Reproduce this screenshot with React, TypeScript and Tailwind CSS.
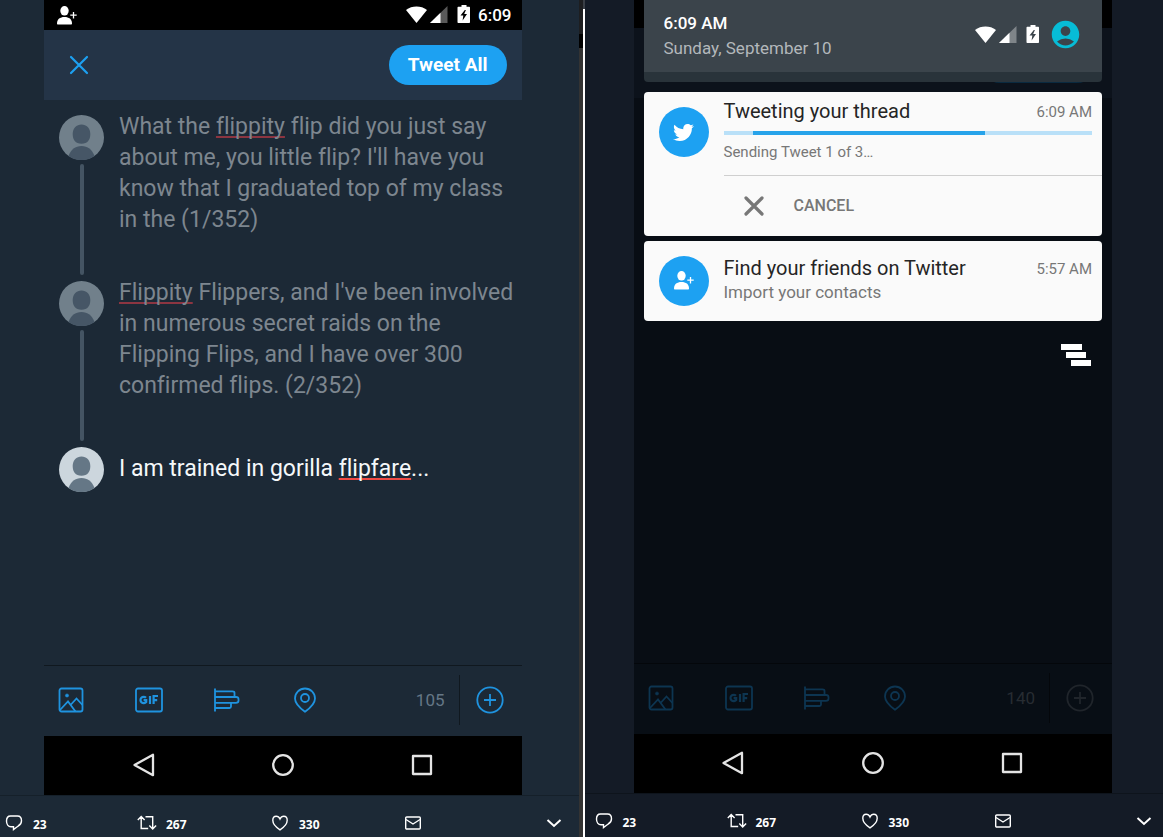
import type { ReactNode } from "react";
import { FaTwitter } from "react-icons/fa";
import { MdAccountCircle } from "react-icons/md";
import clsx from "clsx";

function PersonAddIcon({ className }: { className?: string }) {
  return (
    <svg viewBox="0 0 20 19" className={className} fill="currentColor" aria-hidden="true">
      <ellipse cx="7.5" cy="4.8" rx="4.2" ry="4.8" />
      <path d="M0 17.4c0-4.2 3-6.4 7.5-6.4s7.500 2.200 7.500 6.400c0 .7-.4 1.100-1 1.100H1c-.6 0-1-.4-1-1.100z" />
      <path d="M16.500 6v6.400M13.300 9.200h6.400" stroke="currentColor" strokeWidth="1.300" />
    </svg>
  );
}

function SystemIcons() {
  return (
    <svg viewBox="0 0 64 20" className="h-5 w-16" fill="#fff" aria-hidden="true">
      <path d="M0 5C6 .4 15 .4 21 5L10.500 18z" />
      <path d="M41.500 1v17H24z" opacity=".35" />
      <path d="M34.500 7.800V18H24z" />
      <path
        fillRule="evenodd"
        d="M55.500 0h5v1.800h2.500c.6 0 1 .4 1 1V17c0 .6-.4 1-1 1H52.500c-.6 0-1-.4-1-1V2.800c0-.6.400-1 1-1h3zM58.800 5l-4.300 5.600h2.800l-.7 4.900 4.400-6.400h-2.800l1.700-4.100z"
      />
    </svg>
  );
}

function Avatar({ active }: { active?: boolean }) {
  return (
    <svg viewBox="0 0 45 45" className="size-[45px] shrink-0" aria-hidden="true">
      <circle cx="22.500" cy="22.500" r="22.500" fill={active ? "#ccd6dd" : "#71808b"} />
      <g fill={active ? "#657786" : "#465666"}>
        <path d="M22.500 9.500c5 0 8.800 3.600 8.800 9.500 0 5.700-2.600 9.800-8.800 9.800s-8.800-4.100-8.800-9.800c0-5.900 3.800-9.500 8.800-9.500z" />
        <path d="M9.500 40.900C11.800 34.500 16.300 31 22.500 31s10.700 3.500 13 9.900a22.500 22.500 0 0 1-26 0z" />
      </g>
    </svg>
  );
}

function CloseIcon({ className, strokeWidth }: { className?: string; strokeWidth: number }) {
  return (
    <svg viewBox="0 0 20 20" className={className} fill="none" stroke="currentColor" strokeWidth={strokeWidth} strokeLinecap="round" aria-hidden="true">
      <path d="M2 2l16 16M18 2L2 18" />
    </svg>
  );
}

const tools: { label: string; icon: ReactNode }[] = [
  {
    label: "Add photo",
    icon: (
      <>
        <rect x="2.500" y="2.500" width="23" height="23" rx="2" />
        <path d="M3 24l8-8.500 7.500 10M14 18.500l5.500-6 6 6.500" />
        <circle cx="10" cy="9.500" r="1.600" fill="currentColor" strokeWidth="0.500" />
      </>
    ),
  },
  {
    label: "Add GIF",
    icon: (
      <>
        <rect x="1" y="2.500" width="26" height="23" rx="2" />
        <path strokeWidth="2.200" d="M11 11.800a3.200 3.200 0 1 0 .2 4.200v-1.800H8.600M15 10v8M18.600 18v-8h4.400M18.600 14.200h3.600" />
      </>
    ),
  },
  {
    label: "Add poll",
    icon: <path d="M2 2.500v23M2 5.300h17.500c1.500 0 2 .6 2 1.500v4M2 11h21c1.700 0 2.500.7 2.500 2v1.800c0 1.300-.8 2-2.500 2H2M18 16.800v3.700c0 .9-.5 1.500-1.500 1.500H2" />,
  },
  {
    label: "Add location",
    icon: (
      <>
        <path d="M14 25.700C8.500 21.800 4 18 4 12.500a10 10 0 0 1 20 0c0 5.500-4.500 9.300-10 13.200z" />
        <circle cx="14" cy="12" r="4" />
      </>
    ),
  },
];

function Toolbar({ count, dimmed }: { count: number; dimmed?: boolean }) {
  return (
    <div
      className={clsx(
        "flex h-[71px] items-center border-t pb-0.5 pl-[13px] pr-[18px]",
        dimmed ? "border-[#04070b] bg-[#080e15] text-[#0d3551]" : "border-[#10181f] text-[#1f93df]"
      )}
    >
      <div className="flex gap-[50px]">
        {tools.map((tool) => (
          <button key={tool.label} aria-label={tool.label} className="block">
            <svg viewBox="0 0 28 28" className="size-7" fill="none" stroke="currentColor" strokeWidth="1.800">
              {tool.icon}
            </svg>
          </button>
        ))}
      </div>
      <span className={clsx("ml-auto pt-0.5 text-[17px]", dimmed ? "text-[#272c32]" : "text-[#657786]")}>{count}</span>
      <div className={clsx("ml-[14px] mr-4 h-[50px] w-px", dimmed ? "bg-[#04070b]" : "bg-[#10181f]")} />
      <button aria-label="Add another Tweet" className={clsx("block", dimmed && "text-[#20252b]")}>
        <svg viewBox="0 0 28 28" className="size-7" fill="none" stroke="currentColor" strokeWidth="1.800">
          <circle cx="14" cy="14" r="12.700" />
          <path d="M14 8v12M8 14h12" />
        </svg>
      </button>
    </div>
  );
}

function NavBar() {
  return (
    <div className="grid h-[59px] grid-cols-3 place-items-center bg-black px-[30px] pb-0.5 text-[#e4e4e4]">
      <button aria-label="Back">
        <svg viewBox="0 0 28 28" className="size-7" fill="none" stroke="currentColor" strokeWidth="2.300" strokeLinejoin="round">
          <path d="M23 3.800v20.400L4.500 14z" />
        </svg>
      </button>
      <button aria-label="Home">
        <svg viewBox="0 0 28 28" className="size-7" fill="none" stroke="currentColor" strokeWidth="2.300">
          <circle cx="14" cy="14" r="9.800" />
        </svg>
      </button>
      <button aria-label="Recent apps">
        <svg viewBox="0 0 28 28" className="size-7" fill="none" stroke="currentColor" strokeWidth="2.300" strokeLinejoin="round">
          <rect x="5" y="5" width="18" height="18" />
        </svg>
      </button>
    </div>
  );
}

const stats: { label: string; count?: number; icon: ReactNode }[] = [
  {
    label: "Reply",
    count: 23,
    icon: <path d="M6.500 3h7c2.500 0 4 2 4 4.800 0 2.500-1.300 4.200-3.300 5.200L9.500 16.500v-2.700H7C4.200 13.800 2.500 11 2.500 8S4.200 3 6.500 3z" />,
  },
  {
    label: "Retweet",
    count: 267,
    icon: <path d="M.8 7l3.400-3.500L7.600 7M4.200 3.800v11.700h7M8.500 3.800h7.200v11.700M12.300 12.500l3.400 3.500 3.400-3.500" />,
  },
  {
    label: "Like",
    count: 330,
    icon: <path d="M10 16.800c-4-2.500-7.200-6-7.200-9.500 0-2.500 1.600-4 3.400-4C8 3.300 9.300 4.500 10 6c.7-1.500 2-2.700 3.800-2.700 1.800 0 3.400 1.500 3.400 4 0 3.500-3.200 7-7.200 9.500z" />,
  },
  {
    label: "Message",
    icon: (
      <>
        <rect x="2.700" y="4" width="14.600" height="12" rx="1" />
        <path d="M3 6.500l7 4.500 7-4.500" />
      </>
    ),
  },
];

function TweetActions({ className }: { className?: string }) {
  return (
    <footer className={clsx("flex items-start border-t pt-[17px] text-white", className)}>
      {stats.map((stat) => (
        <button key={stat.label} aria-label={stat.label} className="flex w-[133px] items-start gap-[9px]">
          <svg viewBox="0 0 20 20" className="size-5" fill="none" stroke="currentColor" strokeWidth="1.400">
            {stat.icon}
          </svg>
          {stat.count && <span className="pt-0.5 font-['Open_Sans',sans-serif] text-xs/5 font-bold">{stat.count}</span>}
        </button>
      ))}
      <button aria-label="More" className="ml-auto">
        <svg viewBox="0 0 20 20" className="size-5" fill="none" stroke="currentColor" strokeWidth="2">
          <path d="M3.500 7l6.500 6 6.500-6" />
        </svg>
      </button>
    </footer>
  );
}

function Typo({ children, active }: { children: string; active?: boolean }) {
  return (
    <span
      className={clsx(
        "underline decoration-2 underline-offset-2 [text-decoration-skip-ink:none]",
        active ? "decoration-[#ef4a44]" : "decoration-[#8c3541]"
      )}
    >
      {children}
    </span>
  );
}

function ThreadItem({ children, active }: { children: ReactNode; active?: boolean }) {
  return (
    <li className="flex gap-[15px]">
      <div className="flex flex-col items-center pt-1">
        <Avatar active={active} />
        {!active && <div className="mb-0.5 mt-1 w-1 flex-1 rounded-full bg-[#445463]" />}
      </div>
      <p
        className={clsx(
          "text-[23px]/[31px] [font-variant-ligatures:none]",
          active ? "pt-[10px] text-[#f5f8fa]" : "pb-[42px] text-[#7d868f]"
        )}
      >
        {children}
      </p>
    </li>
  );
}

function ComposePanel() {
  return (
    <section className="flex flex-1 flex-col bg-[#1c2936]">
      <div className="ml-11 mr-[57px] flex flex-1 flex-col">
        <div className="flex h-[30px] items-center bg-black pl-[13px] pr-[10px] text-white">
          <PersonAddIcon className="h-[19px] w-5" />
          <div className="ml-auto flex items-center gap-2">
            <SystemIcons />
            <span className="text-[17px]/5 font-medium">6:09</span>
          </div>
        </div>
        <header className="flex h-[70px] items-center justify-between bg-[#243447] pl-[25px] pr-[15px]">
          <button aria-label="Close" className="text-[#1da1f2]">
            <CloseIcon className="size-5" strokeWidth={2.2} />
          </button>
          <button className="h-10 rounded-full bg-[#1da1f2] px-[19px] text-[19px] font-bold text-white">Tweet All</button>
        </header>
        <ol className="flex-1 pl-[15px] pr-2 pt-[11px]">
          <ThreadItem>
            What the <Typo>flippity</Typo> flip did you just say about me, you little flip? I'll have you know that I
            graduated top of my class in the (1/352)
          </ThreadItem>
          <ThreadItem>
            <Typo>Flippity</Typo> Flippers, and I've been involved in numerous secret raids on the Flipping Flips, and I
            have over 300 confirmed flips. (2/352)
          </ThreadItem>
          <ThreadItem active>
            I am trained in gorilla <Typo active>flipfare</Typo>...
          </ThreadItem>
        </ol>
        <Toolbar count={105} />
        <NavBar />
      </div>
      <TweetActions className="h-[42px] border-[#15202a] pl-1 pr-[15px]" />
    </section>
  );
}

function Divider() {
  return (
    <div className="flex w-1.5">
      <div className="flex w-1 flex-col bg-[#333]">
        <div className="h-[34px] bg-[#1d1e20]" />
        <div className="h-[14px] bg-black" />
      </div>
      <div className="flex w-0.5 flex-col bg-white">
        <div className="h-[9px] bg-[#3a3f46]" />
      </div>
    </div>
  );
}

function Notifications() {
  return (
    <div className="px-[10px]">
      <header className="flex h-[82px] items-start rounded-b-sm border-b-[10px] border-[#29333a] bg-[#3b444b] pl-5 pr-5 pt-[11px]">
        <div className="text-[17px]/[25px]">
          <h2 className="font-medium text-white">6:09 AM</h2>
          <p className="text-[#b3b8bb]">Sunday, September 10</p>
        </div>
        <div className="ml-auto flex items-center gap-[10px] pt-[7px]">
          <SystemIcons />
          <button aria-label="Account" className="text-[#07bcd6]">
            <MdAccountCircle size={33} />
          </button>
        </div>
      </header>

      <article className="mt-[10px] flex rounded-sm bg-[#fafafa] pl-[15px] pt-[7px] text-[#777]">
        <div className="mt-2 grid size-[50px] shrink-0 place-items-center rounded-full bg-[#1da1f2] text-white">
          <FaTwitter size={21} />
        </div>
        <div className="ml-[15px] flex-1">
          <div className="pr-[10px]">
            <div className="flex items-center justify-between">
              <h3 className="text-[20px]/6 text-[#252525]">Tweeting your thread</h3>
              <time className="pt-0.5 text-[15px]">6:09 AM</time>
            </div>
            <div role="progressbar" aria-label="Sending" className="mt-[7px] h-1 bg-[#b9e0f8] px-[8%]">
              <div className="h-full w-3/4 bg-[#27a3ea]" />
            </div>
            <p className="pb-[11px] pt-[5px] text-[15px]/6">Sending Tweet 1 of 3…</p>
          </div>
          <button className="flex h-[61px] w-full items-center gap-[30px] border-t border-[#cfcfcf] pl-5 text-[16px] font-medium">
            <CloseIcon className="size-5" strokeWidth={3.2} />
            CANCEL
          </button>
        </div>
      </article>

      <article className="mt-[5px] flex h-20 rounded-sm bg-[#fafafa] pl-[15px] pr-[10px] pt-[15px] text-[#777]">
        <div className="grid size-[50px] shrink-0 place-items-center rounded-full bg-[#1da1f2] text-white">
          <PersonAddIcon className="h-[19px] w-5" />
        </div>
        <div className="ml-[15px] flex-1">
          <div className="flex items-center justify-between">
            <h3 className="text-[20px]/6 text-[#252525]">Find your friends on Twitter</h3>
            <time className="pt-0.5 text-[15px]">5:57 AM</time>
          </div>
          <p className="text-[17px]/[25px]">Import your contacts</p>
        </div>
      </article>

      <div className="flex justify-end pr-[10px] pt-[23px]">
        <button aria-label="Clear all">
          <svg viewBox="0 0 31 22" className="h-[22px] w-[31px]" fill="#fff">
            <path d="M0 0h21v6H0zM5 8h20v6H5zM10 16h20v6H10z" />
          </svg>
        </button>
      </div>
    </div>
  );
}

function NotificationPanel() {
  return (
    <section className="flex flex-1 flex-col bg-[#141b26]">
      <div className="ml-[49px] mr-[51px] flex flex-1 flex-col bg-[#080d14]">
        {/* the shade opens over the dimmed compose screen */}
        <div className="grid flex-1 *:[grid-area:1/1]">
          <div>
            <div className="h-7 bg-black" />
            <div className="flex h-[70px] items-center justify-end bg-[#0c121b] pr-[15px]">
              <div className="h-10 w-[117px] rounded-full bg-[#0a2a40]" />
            </div>
          </div>
          <Notifications />
        </div>
        <Toolbar count={140} dimmed />
        <NavBar />
      </div>
      <TweetActions className="h-11 border-[#0e141c] pl-[9px] pr-[9px]" />
    </section>
  );
}

export default function App() {
  return (
    <main className="flex min-h-screen font-[Roboto,sans-serif]">
      <ComposePanel />
      <Divider />
      <NotificationPanel />
    </main>
  );
}
